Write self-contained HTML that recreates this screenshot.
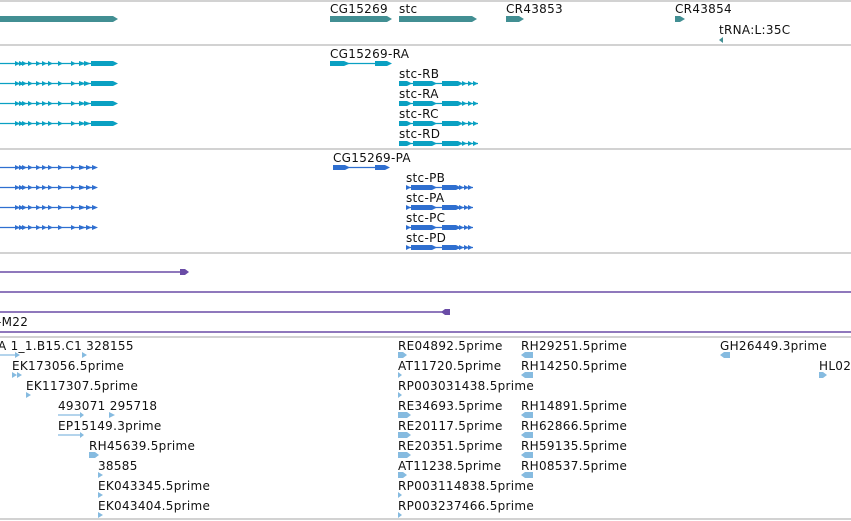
<!DOCTYPE html><html><head><style>
body{margin:0;background:#fff;width:851px;height:521px;overflow:hidden}
svg{display:block}
text{font-family:"DejaVu Sans","Liberation Sans",sans-serif;font-size:12px;fill:#111;letter-spacing:0.3px}
</style></head><body>
<svg width="851" height="521" viewBox="0 0 851 521">
<g stroke="#c4c4c4" stroke-width="1.5">
<line x1="0" y1="1" x2="851" y2="1"/><line x1="0" y1="45" x2="851" y2="45"/><line x1="0" y1="149" x2="851" y2="149"/><line x1="0" y1="253" x2="851" y2="253"/><line x1="0" y1="337" x2="851" y2="337"/><line x1="0" y1="519" x2="851" y2="519"/>
</g>
<!-- track1 -->
<g fill="#428f93">
<path d="M0 16H113L118 19L113 22H0Z"/><path d="M330 16H387L392 19L387 22H330Z"/><path d="M399 16H472L477 19L472 22H399Z"/>
<path d="M506 16H519L524 19L519 22H506Z"/><path d="M675 16H680L685 19L680 22H675Z"/><path d="M719 40L723 37V43Z"/>
</g>
<text x="330" y="13">CG15269</text><text x="399" y="13">stc</text><text x="506" y="13">CR43853</text><text x="675" y="13">CR43854</text><text x="719" y="34">tRNA:L:35C</text>
<!-- track2 -->
<g fill="#0aa0c2" stroke="#0aa0c2">
<g id="lt"><line x1="0" y1="63.5" x2="95" y2="63.5" stroke-width="1.3"/><path stroke="none" d="M15 61L20 63.5L15 66ZM19 61L24 63.5L19 66ZM22 61L27 63.5L22 66ZM28 61L33 63.5L28 66ZM36 61L41 63.5L36 66ZM42 61L47 63.5L42 66ZM48 61L53 63.5L48 66ZM58 61L63 63.5L58 66ZM71 61L76 63.5L71 66ZM79 61L86 63.5L79 66ZM84 61L91 63.5L84 66ZM91 61H113L118 63.5L113 66H91Z"/></g>
<use href="#lt" y="20"/><use href="#lt" y="40"/><use href="#lt" y="60"/>
<line x1="330" y1="63.5" x2="380" y2="63.5" stroke-width="1.3"/><path stroke="none" d="M330 61H344L350 63.5L344 66H330ZM375 61H387L392 63.5L387 66H375Z"/>
<g id="st"><line x1="399" y1="83.5" x2="478" y2="83.5" stroke-width="1.3"/><path stroke="none" d="M399 81H407L412 83.5L407 86H399ZM413 81H432L437 83.5L432 86H413ZM442 81H458L463 83.5L458 86H442ZM462 81L467 83.5L462 86ZM468 81L473 83.5L468 86ZM473 81L478 83.5L473 86Z"/></g>
<use href="#st" y="20"/><use href="#st" y="40"/><use href="#st" y="60"/>
</g>
<text x="330" y="58">CG15269-RA</text><text x="399" y="78">stc-RB</text><text x="399" y="98">stc-RA</text><text x="399" y="118">stc-RC</text><text x="399" y="138">stc-RD</text>
<!-- track3 -->
<g fill="#2f6fd0" stroke="#2f6fd0">
<g id="lp"><line x1="0" y1="167.5" x2="95" y2="167.5" stroke-width="1.3"/><path stroke="none" d="M15 165L20 167.5L15 170ZM19 165L24 167.5L19 170ZM22 165L27 167.5L22 170ZM28 165L33 167.5L28 170ZM36 165L41 167.5L36 170ZM42 165L47 167.5L42 170ZM48 165L53 167.5L48 170ZM58 165L63 167.5L58 170ZM71 165L76 167.5L71 170ZM79 165L86 167.5L79 170ZM86 165L92 167.5L86 170ZM92 165L98 167.5L92 170Z"/></g>
<use href="#lp" y="20"/><use href="#lp" y="40"/><use href="#lp" y="60"/>
<line x1="333" y1="167.5" x2="380" y2="167.5" stroke-width="1.3"/><path stroke="none" d="M333 165H345L350 167.5L345 170H333ZM375 165H385L390 167.5L385 170H375Z"/>
<g id="sp"><line x1="406" y1="187.5" x2="473" y2="187.5" stroke-width="1.3"/><path stroke="none" d="M406 185L411 187.5L406 190ZM411 185H432L437 187.5L432 190H411ZM442 185H456L461 187.5L456 190H442ZM459 185L464 187.5L459 190ZM464 185L469 187.5L464 190ZM468 185L473 187.5L468 190Z"/></g>
<use href="#sp" y="20"/><use href="#sp" y="40"/><use href="#sp" y="60"/>
</g>
<text x="333" y="162">CG15269-PA</text><text x="406" y="182">stc-PB</text><text x="406" y="202">stc-PA</text><text x="406" y="222">stc-PC</text><text x="406" y="242">stc-PD</text>
<!-- track4 -->
<g stroke="#6a4ca6" fill="#6a4ca6" stroke-width="1.4">
<line x1="0" y1="272" x2="184" y2="272"/><path stroke="none" d="M180 269H185L189 272L185 275H180Z"/>
<line x1="0" y1="292" x2="851" y2="292"/>
<line x1="0" y1="312" x2="446" y2="312"/><path stroke="none" d="M445 309H450V315H445L441 312Z"/>
<line x1="0" y1="332" x2="851" y2="332"/>
</g>
<text x="-3" y="326">-M22</text>
<!-- track5 -->
<g fill="#86bbe0" stroke="#86bbe0" stroke-width="1.3">
<line x1="0" y1="355" x2="18" y2="355"/><path stroke="none" d="M15 352L20 355L15 358ZM82 352L87 355L82 358Z"/>
<path stroke="none" d="M12 372L17 375L12 378ZM17 372L22 375L17 378Z"/>
<path stroke="none" d="M26 392L31 395L26 398Z"/>
<line x1="58" y1="415" x2="82" y2="415"/><path stroke="none" d="M80 412L84 415L80 418ZM109 412L115 415L109 418Z"/>
<line x1="58" y1="435" x2="82" y2="435"/><path stroke="none" d="M80 432L84 435L80 438Z"/>
<path stroke="none" d="M89 452H95L99 455L95 458H89Z"/>
<path stroke="none" d="M98 472L103 475L98 478ZM98 492L103 495L98 498ZM98 512L103 515L98 518Z"/>
<path stroke="none" d="M398 352H403L407 355L403 358H398ZM398 372L402 375L398 378ZM398 392L402 395L398 398Z"/>
<path stroke="none" d="M398 412H407L411 415L407 418H398ZM398 432H407L411 435L407 438H398ZM398 452H407L411 455L407 458H398ZM398 472H403L407 475L403 478H398ZM398 492L402 495L398 498ZM398 512L402 515L398 518Z"/>
<path stroke="none" d="M525 352H533V358H525L521 355ZM525 372H533V378H525L521 375ZM525 412H533V418H525L521 415ZM525 432H533V438H525L521 435ZM525 452H533V458H525L521 455ZM525 472H533V478H525L521 475Z"/>
<path stroke="none" d="M724 352H730V358H724L720 355ZM819 372H823L827 375L823 378H819Z"/>
</g>
<text x="-2" y="350">A 1_1.B15.C1 328155</text>
<text x="12" y="370">EK173056.5prime</text>
<text x="26" y="390">EK117307.5prime</text>
<text x="58" y="410">493071 295718</text>
<text x="58" y="430">EP15149.3prime</text>
<text x="89" y="450">RH45639.5prime</text>
<text x="98" y="470">38585</text>
<text x="98" y="490">EK043345.5prime</text>
<text x="98" y="510">EK043404.5prime</text>
<text x="398" y="350">RE04892.5prime</text><text x="398" y="370">AT11720.5prime</text><text x="398" y="390">RP003031438.5prime</text><text x="398" y="410">RE34693.5prime</text><text x="398" y="430">RE20117.5prime</text><text x="398" y="450">RE20351.5prime</text><text x="398" y="470">AT11238.5prime</text><text x="398" y="490">RP003114838.5prime</text><text x="398" y="510">RP003237466.5prime</text>
<text x="521" y="350">RH29251.5prime</text><text x="521" y="370">RH14250.5prime</text><text x="521" y="410">RH14891.5prime</text><text x="521" y="430">RH62866.5prime</text><text x="521" y="450">RH59135.5prime</text><text x="521" y="470">RH08537.5prime</text>
<text x="720" y="350">GH26449.3prime</text><text x="819" y="370">HL02</text>
</svg>
</body></html>
